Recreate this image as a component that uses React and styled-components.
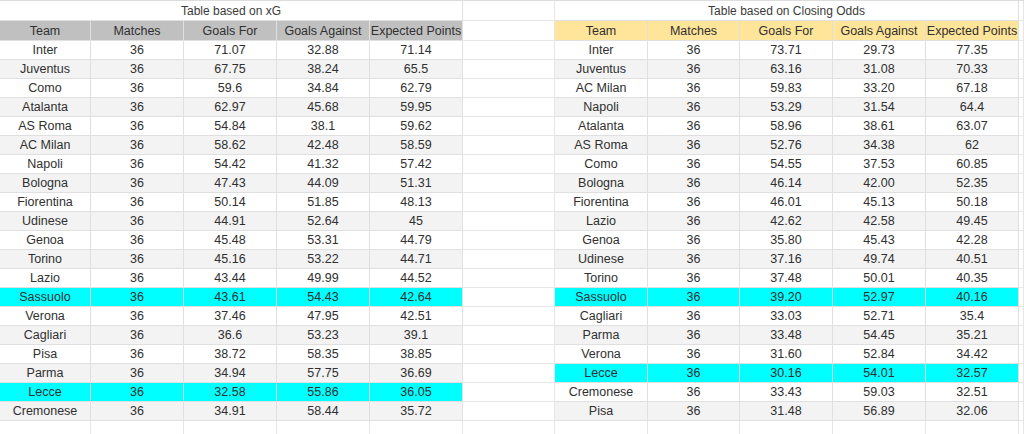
import styled, { createGlobalStyle } from "styled-components";

const GlobalStyle = createGlobalStyle`
	html, body {
		margin: 0;
		padding: 0;
		background: #ffffff;
	}
	body {
		font-family: "Liberation Sans", Arial, sans-serif;
		color: #333333;
	}
`;

const COLUMNS = "91px 93px 93px 93px 93px 92px 93px 92px 93px 93px 93px 1fr";

const headers = ["Team", "Matches", "Goals For", "Goals Against", "Expected Points"];

const xgTable = [
	["Inter", 36, "71.07", "32.88", "71.14"],
	["Juventus", 36, "67.75", "38.24", "65.5"],
	["Como", 36, "59.6", "34.84", "62.79"],
	["Atalanta", 36, "62.97", "45.68", "59.95"],
	["AS Roma", 36, "54.84", "38.1", "59.62"],
	["AC Milan", 36, "58.62", "42.48", "58.59"],
	["Napoli", 36, "54.42", "41.32", "57.42"],
	["Bologna", 36, "47.43", "44.09", "51.31"],
	["Fiorentina", 36, "50.14", "51.85", "48.13"],
	["Udinese", 36, "44.91", "52.64", "45"],
	["Genoa", 36, "45.48", "53.31", "44.79"],
	["Torino", 36, "45.16", "53.22", "44.71"],
	["Lazio", 36, "43.44", "49.99", "44.52"],
	["Sassuolo", 36, "43.61", "54.43", "42.64"],
	["Verona", 36, "37.46", "47.95", "42.51"],
	["Cagliari", 36, "36.6", "53.23", "39.1"],
	["Pisa", 36, "38.72", "58.35", "38.85"],
	["Parma", 36, "34.94", "57.75", "36.69"],
	["Lecce", 36, "32.58", "55.86", "36.05"],
	["Cremonese", 36, "34.91", "58.44", "35.72"],
];

const oddsTable = [
	["Inter", 36, "73.71", "29.73", "77.35"],
	["Juventus", 36, "63.16", "31.08", "70.33"],
	["AC Milan", 36, "59.83", "33.20", "67.18"],
	["Napoli", 36, "53.29", "31.54", "64.4"],
	["Atalanta", 36, "58.96", "38.61", "63.07"],
	["AS Roma", 36, "52.76", "34.38", "62"],
	["Como", 36, "54.55", "37.53", "60.85"],
	["Bologna", 36, "46.14", "42.00", "52.35"],
	["Fiorentina", 36, "46.01", "45.13", "50.18"],
	["Lazio", 36, "42.62", "42.58", "49.45"],
	["Genoa", 36, "35.80", "45.43", "42.28"],
	["Udinese", 36, "37.16", "49.74", "40.51"],
	["Torino", 36, "37.48", "50.01", "40.35"],
	["Sassuolo", 36, "39.20", "52.97", "40.16"],
	["Cagliari", 36, "33.03", "52.71", "35.4"],
	["Parma", 36, "33.48", "54.45", "35.21"],
	["Verona", 36, "31.60", "52.84", "34.42"],
	["Lecce", 36, "30.16", "54.01", "32.57"],
	["Cremonese", 36, "33.43", "59.03", "32.51"],
	["Pisa", 36, "31.48", "56.89", "32.06"],
];

// teams that are highlighted in both tables
const highlighted = ["Sassuolo", "Lecce"];

function rowColor(team, index) {
	if (highlighted.includes(team)) return "#00ffff";
	return index % 2 === 1 ? "#f3f3f3" : "#ffffff";
}

function App() {
	return (
		<>
			<GlobalStyle />
			<Sheet>
				<Row $height={20}>
					<Title>Table based on xG</Title>
					<Blank />
					<Title>Table based on Closing Odds</Title>
					<Blank />
				</Row>

				<Row $height={20}>
					{headers.map((h) => (
						<Cell key={"l" + h} $bg="#c0c0c0">{h}</Cell>
					))}
					<Blank />
					{headers.map((h) => (
						<Cell key={"r" + h} $bg="#ffe599">{h}</Cell>
					))}
					<Blank />
				</Row>

				{xgTable.map((left, i) => {
					const right = oddsTable[i];
					return (
						<Row key={i} $height={19}>
							{left.map((v, j) => (
								<Cell key={"l" + j} $bg={rowColor(left[0], i)}>{v}</Cell>
							))}
							<Blank />
							{right.map((v, j) => (
								<Cell key={"r" + j} $bg={rowColor(right[0], i)}>{v}</Cell>
							))}
							<Blank />
						</Row>
					);
				})}

				<Row $height={14}>
					{Array.from({ length: 12 }).map((_, i) => (
						<Blank key={i} />
					))}
				</Row>
			</Sheet>
		</>
	);
}

export default App;

const Sheet = styled.div`
	display: flex;
	flex-direction: column;
	width: 1024px;
	height: 434px;
	overflow: hidden;
	border-top: 1px solid #dcdcdc;
	box-sizing: border-box;
`;

const Row = styled.div`
	display: grid;
	grid-template-columns: ${COLUMNS};
	height: ${(p) => p.$height}px;
	flex-shrink: 0;
`;

const Cell = styled.div`
	display: flex;
	align-items: center;
	justify-content: center;
	box-sizing: border-box;
	background-color: ${(p) => p.$bg};
	border-right: 1px solid #e0e0e0;
	border-bottom: 1px solid #e0e0e0;
	font-size: 12.5px;
	color: #303030;
	white-space: nowrap;
	overflow: hidden;
`;

const Title = styled(Cell)`
	grid-column: span 5;
	background-color: #ffffff;
	font-size: 12px;
	color: #3a3a3a;
`;

const Blank = styled.div`
	box-sizing: border-box;
	border-right: 1px solid #e6e6e6;
	border-bottom: 1px solid #e6e6e6;
	background: #ffffff;
`;
